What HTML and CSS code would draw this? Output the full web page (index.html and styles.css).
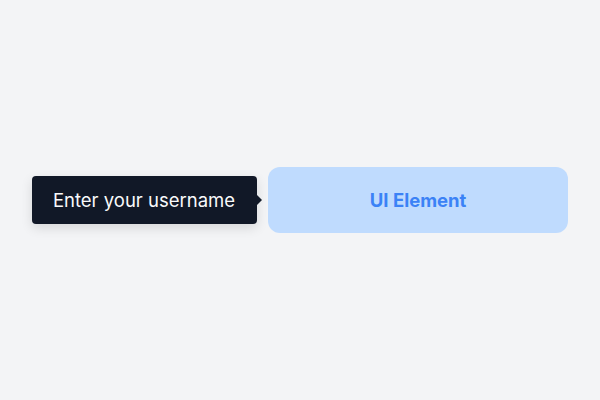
FILE: index.html
```html
<!DOCTYPE html>
<html>
<head>
<meta charset="utf-8">
<link rel="stylesheet" href="styles.css">
</head>
<body>
<div class="stage">
  <div class="group">
    <div class="tooltip">Enter your username<span class="arrow"></span></div>
    <div class="element">UI Element</div>
  </div>
</div>
</body>
</html>
```
FILE: styles.css
```css
html, body { margin: 0; padding: 0; }
body {
  width: 600px;
  height: 400px;
  background: #f3f4f6;
  font-family: Inter, "Noto Sans", sans-serif;
}
.stage {
  width: 600px;
  height: 400px;
  display: flex;
  align-items: center;
  justify-content: center;
}
.group {
  display: flex;
  align-items: center;
  gap: 11px;
}
.tooltip {
  position: relative;
  background: #111827;
  color: #f9fafb;
  font-size: 18.5px;
  line-height: 24px;
  padding: 12px 22px 12px 21px;
  border-radius: 4px;
  box-shadow: 0 4px 12px rgba(0,0,0,0.12);
  white-space: nowrap;
}
.arrow {
  position: absolute;
  right: -5px;
  top: 50%;
  margin-top: -5px;
  width: 0;
  height: 0;
  border-top: 5px solid transparent;
  border-bottom: 5px solid transparent;
  border-left: 5px solid #111827;
}
.element {
  width: 300px;
  height: 66px;
  background: #bfdbfe;
  color: #3b82f6;
  font-weight: 700;
  font-size: 18.5px;
  border-radius: 12px;
  display: flex;
  align-items: center;
  justify-content: center;
}
```
